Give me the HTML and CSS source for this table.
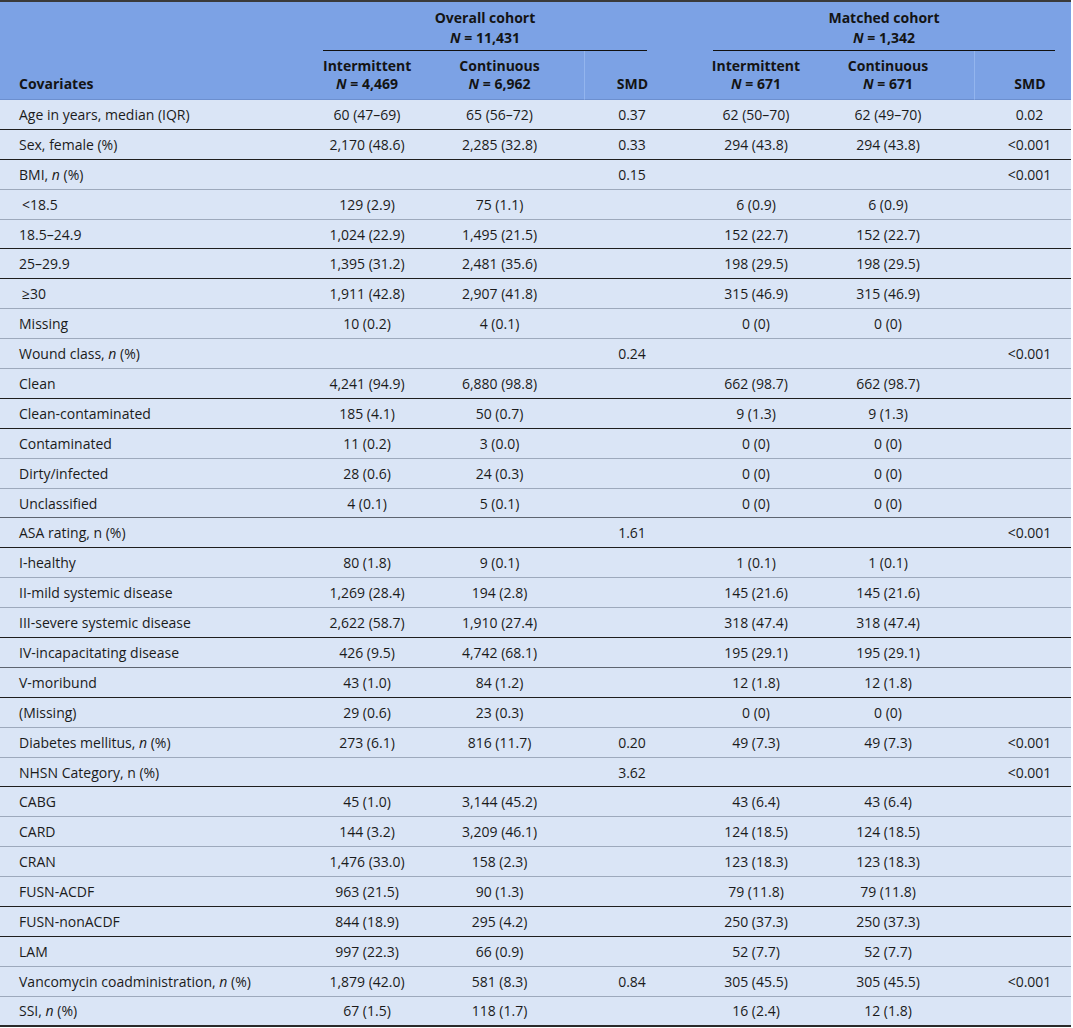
FILE: index.html
```html
<!DOCTYPE html>
<html lang="en">
<head>
<meta charset="utf-8">
<title>Covariates table</title>
<link rel="stylesheet" href="styles.css">
</head>
<body>
<table class="tbl">
  <colgroup>
    <col class="w0"><col class="w1"><col class="w2"><col class="w3"><col class="w4"><col class="w5"><col class="w6">
  </colgroup>
  <thead>
    <tr class="hrow1">
      <th rowspan="2" class="hcov">Covariates</th>
      <th colspan="3" class="hgrp"><div class="grp grp-overall">Overall cohort<br><i>N</i>&nbsp;=&nbsp;11,431</div></th>
      <th colspan="3" class="hgrp"><div class="grp grp-matched">Matched cohort<br><i>N</i>&nbsp;=&nbsp;1,342</div></th>
    </tr>
    <tr class="hrow2">
      <th class="c1">Intermittent<br><i>N</i>&nbsp;=&nbsp;4,469</th>
      <th class="c2">Continuous<br><i>N</i>&nbsp;=&nbsp;6,962</th>
      <th class="c3 vl">SMD</th>
      <th class="c4">Intermittent<br><i>N</i>&nbsp;=&nbsp;671</th>
      <th class="c5">Continuous<br><i>N</i>&nbsp;=&nbsp;671</th>
      <th class="c6 vl">SMD</th>
    </tr>
  </thead>
  <tbody>
    <tr class="dk"><td>Age in years, median (IQR)</td><td class="c1">60 (47–69)</td><td class="c2">65 (56–72)</td><td class="c3">0.37</td><td class="c4">62 (50–70)</td><td class="c5">62 (49–70)</td><td class="c6">0.02</td></tr>
    <tr class="dk"><td>Sex, female (%)</td><td class="c1">2,170 (48.6)</td><td class="c2">2,285 (32.8)</td><td class="c3">0.33</td><td class="c4">294 (43.8)</td><td class="c5">294 (43.8)</td><td class="c6">&lt;0.001</td></tr>
    <tr class="lt"><td>BMI, <i>n</i> (%)</td><td class="c1"></td><td class="c2"></td><td class="c3">0.15</td><td class="c4"></td><td class="c5"></td><td class="c6">&lt;0.001</td></tr>
    <tr class="lt"><td class="ind">&lt;18.5</td><td class="c1">129 (2.9)</td><td class="c2">75 (1.1)</td><td class="c3"></td><td class="c4">6 (0.9)</td><td class="c5">6 (0.9)</td><td class="c6"></td></tr>
    <tr class="dk"><td>18.5–24.9</td><td class="c1">1,024 (22.9)</td><td class="c2">1,495 (21.5)</td><td class="c3"></td><td class="c4">152 (22.7)</td><td class="c5">152 (22.7)</td><td class="c6"></td></tr>
    <tr class="dk"><td>25–29.9</td><td class="c1">1,395 (31.2)</td><td class="c2">2,481 (35.6)</td><td class="c3"></td><td class="c4">198 (29.5)</td><td class="c5">198 (29.5)</td><td class="c6"></td></tr>
    <tr class="lt"><td class="ind">≥30</td><td class="c1">1,911 (42.8)</td><td class="c2">2,907 (41.8)</td><td class="c3"></td><td class="c4">315 (46.9)</td><td class="c5">315 (46.9)</td><td class="c6"></td></tr>
    <tr class="lt"><td>Missing</td><td class="c1">10 (0.2)</td><td class="c2">4 (0.1)</td><td class="c3"></td><td class="c4">0 (0)</td><td class="c5">0 (0)</td><td class="c6"></td></tr>
    <tr class="lt"><td>Wound class, <i>n</i> (%)</td><td class="c1"></td><td class="c2"></td><td class="c3">0.24</td><td class="c4"></td><td class="c5"></td><td class="c6">&lt;0.001</td></tr>
    <tr class="dk"><td>Clean</td><td class="c1">4,241 (94.9)</td><td class="c2">6,880 (98.8)</td><td class="c3"></td><td class="c4">662 (98.7)</td><td class="c5">662 (98.7)</td><td class="c6"></td></tr>
    <tr class="dk"><td>Clean-contaminated</td><td class="c1">185 (4.1)</td><td class="c2">50 (0.7)</td><td class="c3"></td><td class="c4">9 (1.3)</td><td class="c5">9 (1.3)</td><td class="c6"></td></tr>
    <tr class="lt"><td>Contaminated</td><td class="c1">11 (0.2)</td><td class="c2">3 (0.0)</td><td class="c3"></td><td class="c4">0 (0)</td><td class="c5">0 (0)</td><td class="c6"></td></tr>
    <tr class="lt"><td>Dirty/infected</td><td class="c1">28 (0.6)</td><td class="c2">24 (0.3)</td><td class="c3"></td><td class="c4">0 (0)</td><td class="c5">0 (0)</td><td class="c6"></td></tr>
    <tr class="md"><td>Unclassified</td><td class="c1">4 (0.1)</td><td class="c2">5 (0.1)</td><td class="c3"></td><td class="c4">0 (0)</td><td class="c5">0 (0)</td><td class="c6"></td></tr>
    <tr class="dk"><td>ASA rating, n (%)</td><td class="c1"></td><td class="c2"></td><td class="c3">1.61</td><td class="c4"></td><td class="c5"></td><td class="c6">&lt;0.001</td></tr>
    <tr class="lt"><td>I-healthy</td><td class="c1">80 (1.8)</td><td class="c2">9 (0.1)</td><td class="c3"></td><td class="c4">1 (0.1)</td><td class="c5">1 (0.1)</td><td class="c6"></td></tr>
    <tr class="lt"><td>II-mild systemic disease</td><td class="c1">1,269 (28.4)</td><td class="c2">194 (2.8)</td><td class="c3"></td><td class="c4">145 (21.6)</td><td class="c5">145 (21.6)</td><td class="c6"></td></tr>
    <tr class="dk"><td>III-severe systemic disease</td><td class="c1">2,622 (58.7)</td><td class="c2">1,910 (27.4)</td><td class="c3"></td><td class="c4">318 (47.4)</td><td class="c5">318 (47.4)</td><td class="c6"></td></tr>
    <tr class="md"><td>IV-incapacitating disease</td><td class="c1">426 (9.5)</td><td class="c2">4,742 (68.1)</td><td class="c3"></td><td class="c4">195 (29.1)</td><td class="c5">195 (29.1)</td><td class="c6"></td></tr>
    <tr class="dk"><td>V-moribund</td><td class="c1">43 (1.0)</td><td class="c2">84 (1.2)</td><td class="c3"></td><td class="c4">12 (1.8)</td><td class="c5">12 (1.8)</td><td class="c6"></td></tr>
    <tr class="lt"><td>(Missing)</td><td class="c1">29 (0.6)</td><td class="c2">23 (0.3)</td><td class="c3"></td><td class="c4">0 (0)</td><td class="c5">0 (0)</td><td class="c6"></td></tr>
    <tr class="lt"><td>Diabetes mellitus, <i>n</i> (%)</td><td class="c1">273 (6.1)</td><td class="c2">816 (11.7)</td><td class="c3">0.20</td><td class="c4">49 (7.3)</td><td class="c5">49 (7.3)</td><td class="c6">&lt;0.001</td></tr>
    <tr class="dk"><td>NHSN Category, n (%)</td><td class="c1"></td><td class="c2"></td><td class="c3">3.62</td><td class="c4"></td><td class="c5"></td><td class="c6">&lt;0.001</td></tr>
    <tr class="lt"><td>CABG</td><td class="c1">45 (1.0)</td><td class="c2">3,144 (45.2)</td><td class="c3"></td><td class="c4">43 (6.4)</td><td class="c5">43 (6.4)</td><td class="c6"></td></tr>
    <tr class="lt"><td>CARD</td><td class="c1">144 (3.2)</td><td class="c2">3,209 (46.1)</td><td class="c3"></td><td class="c4">124 (18.5)</td><td class="c5">124 (18.5)</td><td class="c6"></td></tr>
    <tr class="lt"><td>CRAN</td><td class="c1">1,476 (33.0)</td><td class="c2">158 (2.3)</td><td class="c3"></td><td class="c4">123 (18.3)</td><td class="c5">123 (18.3)</td><td class="c6"></td></tr>
    <tr class="dk"><td>FUSN-ACDF</td><td class="c1">963 (21.5)</td><td class="c2">90 (1.3)</td><td class="c3"></td><td class="c4">79 (11.8)</td><td class="c5">79 (11.8)</td><td class="c6"></td></tr>
    <tr class="dk"><td>FUSN-nonACDF</td><td class="c1">844 (18.9)</td><td class="c2">295 (4.2)</td><td class="c3"></td><td class="c4">250 (37.3)</td><td class="c5">250 (37.3)</td><td class="c6"></td></tr>
    <tr class="lt"><td>LAM</td><td class="c1">997 (22.3)</td><td class="c2">66 (0.9)</td><td class="c3"></td><td class="c4">52 (7.7)</td><td class="c5">52 (7.7)</td><td class="c6"></td></tr>
    <tr class="lt"><td>Vancomycin coadministration, <i>n</i> (%)</td><td class="c1">1,879 (42.0)</td><td class="c2">581 (8.3)</td><td class="c3">0.84</td><td class="c4">305 (45.5)</td><td class="c5">305 (45.5)</td><td class="c6">&lt;0.001</td></tr>
    <tr class="last"><td>SSI, <i>n</i> (%)</td><td class="c1">67 (1.5)</td><td class="c2">118 (1.7)</td><td class="c3"></td><td class="c4">16 (2.4)</td><td class="c5">12 (1.8)</td><td class="c6"></td></tr>
  </tbody>
</table>
</body>
</html>
```

FILE: styles.css
```css
html, body {
  margin: 0;
  padding: 0;
  background: #ffffff;
}

body {
  font-family: "Open Sans", "Noto Sans", "Liberation Sans", sans-serif;
  font-size: 14px;
  color: #1b1b1b;
}

.tbl {
  width: 1071px;
  table-layout: fixed;
  border-collapse: separate;
  border-spacing: 0;
  border-top: 2px solid #3a3a3a;
}

.w0 { width: 323px; }
.w1 { width: 110px; }
.w2 { width: 151px; }
.w3 { width: 96px; }
.w4 { width: 152px; }
.w5 { width: 142px; }
.w6 { width: 97px; }

thead th {
  background: #7ca2e5;
  font-weight: 700;
  color: #141414;
  line-height: 18px;
  padding: 0;
  text-align: center;
}

.hcov {
  text-align: left;
  vertical-align: bottom;
  padding: 0 0 6px 19px;
  border-bottom: 1px solid #6c8fcf;
}

.hgrp {
  vertical-align: top;
}

.grp {
  line-height: 20px;
  padding: 6px 0 2px;
  border-bottom: 1.5px solid #111111;
}

.grp-overall { margin: 0 33px 0 0; }
.grp-matched { margin: 0 16px 0 33px; }

.hrow2 th {
  padding-top: 6px;
  padding-bottom: 6px;
  vertical-align: bottom;
  border-bottom: 1px solid #6c8fcf;
}

.hrow2 th.vl {
  border-left: 1px solid #93b5ee;
}

tbody td {
  background: #dae5f6;
  height: 29.9px;
  box-sizing: border-box;
  padding: 0;
  vertical-align: middle;
  text-align: center;
  white-space: nowrap;
  border-bottom: 1px solid #9da9bc;
}

tbody td:first-child {
  text-align: left;
  padding-left: 19px;
}

tbody td.ind {
  padding-left: 22px;
}

.c1 { padding-right: 22px !important; }
.c2 { padding-right: 18px !important; }
.c5 { padding-right: 30px !important; }
.c6 { padding-left: 14px !important; }

tbody tr.dk td { border-bottom-color: #1e1e1e; }
tbody tr.md td { border-bottom-color: #5d6470; }
tbody tr.lt td { border-bottom-color: #9da9bc; }
tbody tr.last td {
  border-bottom: 2px solid #2a2a2a;
}
```
